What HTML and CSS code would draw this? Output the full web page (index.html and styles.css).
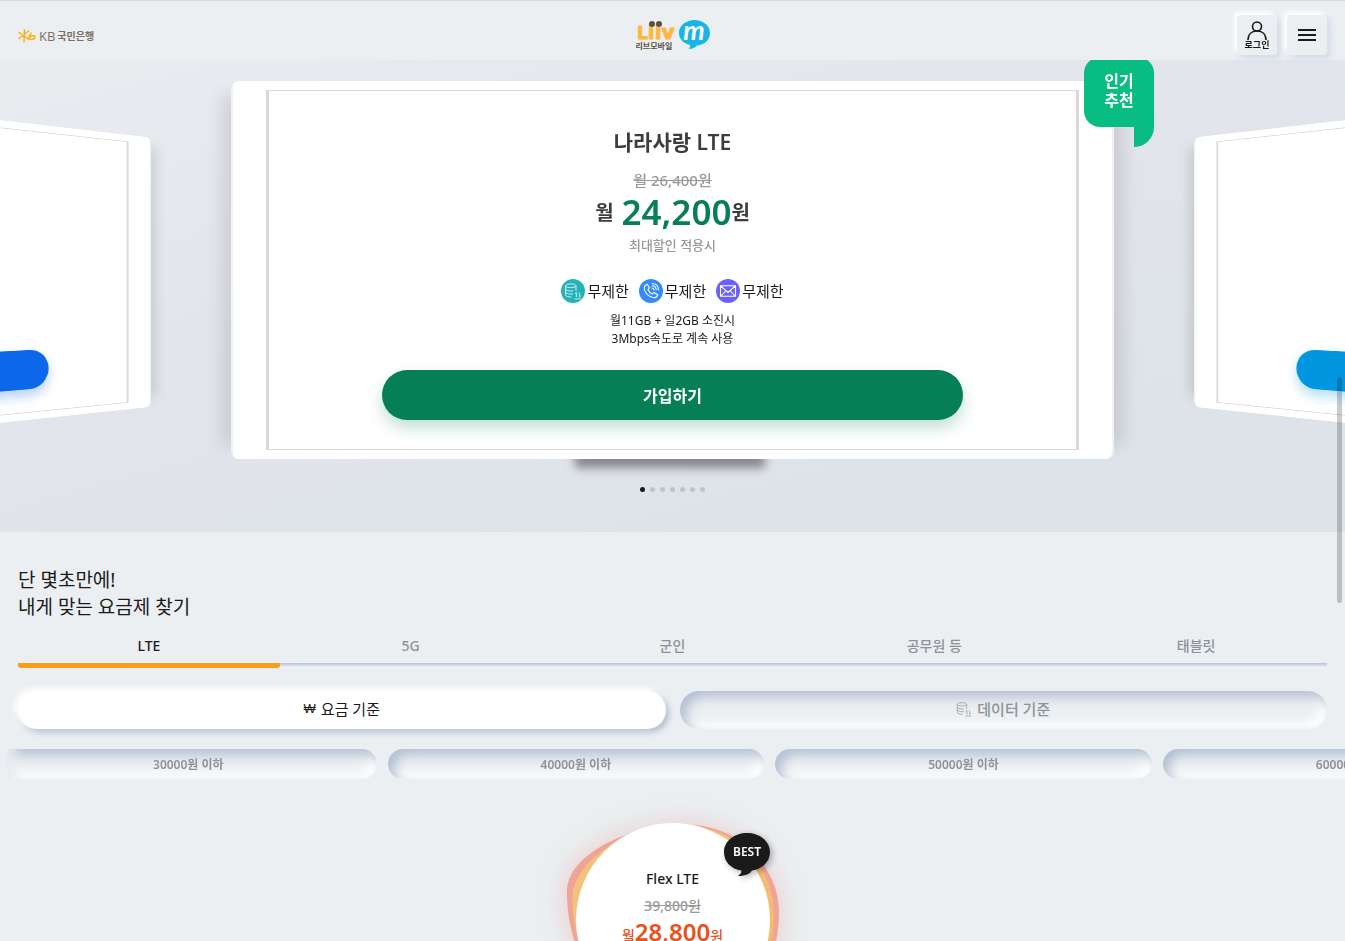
FILE: index.html
```html
<!DOCTYPE html>
<html lang="ko">
<head>
    <meta charset="UTF-8">
    <meta name="viewport" content="width=device-width, initial-scale=1.0">
    <title>리브모바일</title>
    <link rel="stylesheet" href="styles.css">
</head>
<body>
    <svg class="defs" width="0" height="0" aria-hidden="true">
        <symbol id="icon-data" viewBox="0 0 24 24">
            <g fill="none" stroke="currentColor">
                <ellipse cx="9" cy="5" rx="7" ry="2.500"/>
                <path d="M2 5v12c0 2 3.500 3 8 3M2 9c0 2 3.500 3 7 3h3M2 13c0 2 3.500 3 7 3h3M16 5v7M14 22.500h9M16.500 20v-6l-2 2M20.500 14v6l2-2"/>
            </g>
        </symbol>
    </svg>

    <div class="page">
        <header class="header">
            <a class="bank" href="#">
                <svg width="18" height="14" viewBox="0 0 18 14" aria-hidden="true">
                    <g fill="none" stroke="#fbaf17" stroke-width="1.500" stroke-linecap="round">
                        <path d="M6.500 1l-.5 12M1 3.500l10 7M1 9.500L10.500 2"/>
                        <path d="M13 4l-2.500 5c1.500-2 6-3.500 6.500-1.200.3 2.500-4 3.700-6.500 1.200"/>
                    </g>
                </svg>
                <span class="bank-kb">KB</span>
                <span class="bank-name">국민은행</span>
            </a>

            <a class="logo" href="#">
                <span class="logo-words">
                    <svg width="42" height="21" viewBox="0 0 42 21">
                        <text class="logo-liiv" x="1" y="19"><tspan class="logo-l">L</tspan>iiv</text>
                        <circle cx="16" cy="4" r="3" fill="#5a5044"/>
                        <circle cx="23" cy="4" r="3" fill="#5a5044"/>
                    </svg>
                    <span class="logo-ko">리브모바일</span>
                </span>
                <svg width="31" height="30" viewBox="0 0 31 30">
                    <path d="M15.500 0C24 0 31 5.500 31 13c0 7-6 12-13 12.500-2 2.500-5 3.500-8.500 3.500 1.500-1.200 2-2.500 1.500-4C4.500 23.500 0 19 0 13 0 5.500 7 0 15.500 0z" fill="#17b6e4"/>
                    <text class="logo-m" x="15" y="20" text-anchor="middle">m</text>
                </svg>
            </a>

            <div class="header-buttons">
                <button class="icon-button" type="button">
                    <svg width="20" height="19" viewBox="0 0 20 19" fill="none" stroke="#1a1a1a" stroke-width="1.600" aria-hidden="true">
                        <circle cx="10" cy="5.500" r="4.500"/>
                        <path d="M1 19c0-6 4-9 9-9s9 3 9 9"/>
                    </svg>
                    <span>로그인</span>
                </button>
                <button class="icon-button" type="button" aria-label="메뉴">
                    <svg width="18" height="14" viewBox="0 0 18 14" stroke="#1a1a1a" stroke-width="2" aria-hidden="true">
                        <path d="M0 2h18M0 7h18M0 12h18"/>
                    </svg>
                </button>
            </div>
        </header>

        <main>
            <section class="hero">
                <div class="carousel">
                    <div class="slide slide-prev">
                        <div class="plan">
                            <button class="join join-blue" type="button" aria-label="가입하기"></button>
                        </div>
                    </div>

                    <div class="slide slide-current">
                        <div class="plan">
                            <h2 class="plan-name">나라사랑 LTE</h2>
                            <del class="plan-before">월 26,400원</del>
                            <p class="plan-price"><span class="plan-unit">월</span><strong>24,200</strong>원</p>
                            <p class="plan-note">최대할인 적용시</p>
                            <ul class="features">
                                <li>
                                    <span class="dot-icon teal"><svg width="18" height="18"><use href="#icon-data"/></svg></span>무제한
                                </li>
                                <li>
                                    <span class="dot-icon blue">
                                        <svg width="18" height="18" viewBox="0 0 24 24" fill="none" stroke="currentColor" stroke-width="1.400">
                                            <path d="M7 3l3 5-2 2c1 3 3 5 6 6l2-2 5 3c-1 3-3 4-5 4C9 20 3 14 3 8c0-2 1-4 4-5z"/>
                                            <path d="M13 8c2 0 3 1 3 3M13 5c4 0 6 2 6 6M13 2c6 0 9 3 9 9"/>
                                        </svg>
                                    </span>무제한
                                </li>
                                <li>
                                    <span class="dot-icon violet">
                                        <svg width="18" height="18" viewBox="0 0 24 24" fill="none" stroke="currentColor" stroke-width="1.400">
                                            <path d="M2 5h20v14H2zM2 5l10 9 10-9M2 19l7-7M22 19l-7-7"/>
                                        </svg>
                                    </span>무제한
                                </li>
                            </ul>
                            <p class="plan-detail">월11GB + 일2GB 소진시<br>3Mbps속도로 계속 사용</p>
                            <button class="join join-green" type="button">가입하기</button>
                        </div>
                        <span class="ribbon">인기<br>추천</span>
                    </div>

                    <div class="slide slide-next">
                        <div class="plan">
                            <button class="join join-sky" type="button" aria-label="가입하기"></button>
                        </div>
                    </div>
                </div>

                <div class="pager">
                    <button class="active" type="button" aria-label="1"></button>
                    <button type="button" aria-label="2"></button>
                    <button type="button" aria-label="3"></button>
                    <button type="button" aria-label="4"></button>
                    <button type="button" aria-label="5"></button>
                    <button type="button" aria-label="6"></button>
                    <button type="button" aria-label="7"></button>
                </div>
            </section>

            <section class="finder">
                <h2 class="finder-title">단 몇초만에!<br>내게 맞는 요금제 찾기</h2>

                <div class="tabs">
                    <button class="active" type="button">LTE</button>
                    <button type="button">5G</button>
                    <button type="button">군인</button>
                    <button type="button">공무원 등</button>
                    <button type="button">태블릿</button>
                </div>

                <div class="criteria">
                    <button class="active" type="button"><span class="won">₩</span>요금 기준</button>
                    <button type="button"><svg width="16" height="16" aria-hidden="true"><use href="#icon-data"/></svg>데이터 기준</button>
                </div>

                <div class="ranges">
                    <button type="button">30000원 이하</button>
                    <button type="button">40000원 이하</button>
                    <button type="button">50000원 이하</button>
                    <button type="button">60000원 이하</button>
                </div>

                <a class="result" href="#">
                    <svg class="result-blob" viewBox="0 0 212 212" aria-hidden="true">
                        <defs>
                            <linearGradient id="amber" x1="0" y1="0" x2="1" y2="1">
                                <stop offset="0" stop-color="#f3c57e"/>
                                <stop offset="1" stop-color="#f5b76c"/>
                            </linearGradient>
                        </defs>
                        <path d="M0 66C2 40 34 18 74 7 110-3 145 0 170 16c26 18 43 45 42 76-1 60-40 115-100 116C40 208-2 130 0 66z" fill="#f0a497"/>
                        <path d="M6 68C12 40 50 8 100 4c30-3 55 2 76 20 22 20 32 45 31 74-3 60-40 104-95 104C50 202 0 130 6 68z" fill="url(#amber)"/>
                    </svg>
                    <span class="result-disc">
                        <span class="result-name">Flex LTE</span>
                        <del class="result-before">39,800원</del>
                        <span class="result-price">월<strong>28,800</strong>원</span>
                    </span>
                    <svg class="result-best" width="46" height="44" viewBox="0 0 46 44">
                        <path d="M23 0c12.500 0 23 8 23 19 0 10-8 17-18 18.500-2 3-6 5.500-14 5.500 2-1.500 3.500-3 3.500-5.500C7 36 0 29 0 19 0 8 10.500 0 23 0z" fill="#1a1a1a"/>
                        <text x="23" y="23" text-anchor="middle">BEST</text>
                    </svg>
                </a>
            </section>
        </main>

        <div class="scroll-thumb"></div>
    </div>
</body>
</html>
```

FILE: styles.css
```css
* {
    box-sizing: border-box;
    margin: 0;
    padding: 0;
}

body {
    background: #ebeff2;
    color: #1a1a1a;
    font-family: "Noto Sans", "Noto Sans CJK KR", sans-serif;
    font-size: 14px;
}

button {
    border: none;
    background: none;
    font: inherit;
    color: inherit;
    cursor: pointer;
}

a {
    color: inherit;
    text-decoration: none;
}

ul {
    list-style: none;
}

.defs {
    position: absolute;
}

.page {
    height: 100vh;
    overflow: hidden;
}

/* header */
.header {
    position: relative;
    z-index: 10;
    display: grid;
    grid-template-columns: 1fr auto 1fr;
    align-items: center;
    height: 60px;
    padding: 10px 18px 0;
    background: #ebeff2;
    box-shadow: inset 0 1px #d8dce0;
}

.bank {
    display: flex;
    align-items: center;
    padding-top: 2px;
    color: #7b6f66;
    line-height: 14px;
}

.bank-kb {
    margin: 0 2px 0 3px;
    font-family: "Open Sans", sans-serif;
    font-size: 13px;
}

.bank-name {
    font-size: 10px;
    font-weight: 600;
}

.logo {
    display: flex;
    gap: 1px;
    align-items: center;
}

.logo svg {
    overflow: visible;
}

.logo-words {
    display: flex;
    flex-direction: column;
}

.logo-liiv {
    font-family: "DejaVu Sans", sans-serif;
    font-size: 20px;
    font-weight: 700;
    fill: #fdb73e;
    stroke: #fdb73e;
    stroke-width: 1px;
    stroke-linejoin: round;
}

.logo-l {
    font-size: 17px;
}

.logo-ko {
    color: #5a5044;
    font-size: 8px;
    font-weight: 700;
    line-height: 9px;
}

.logo-m {
    font-family: Lato, sans-serif;
    font-size: 27px;
    font-style: italic;
    font-weight: 700;
    fill: #fff;
}

.header-buttons {
    display: flex;
    gap: 10px;
    justify-content: flex-end;
}

.icon-button {
    display: flex;
    flex-direction: column;
    align-items: center;
    justify-content: center;
    width: 40px;
    height: 40px;
    border-radius: 4px;
    background: #ebeff2;
    box-shadow: -3px -3px 5px #fff, 3px 3px 6px #cfd6e6;
    font-size: 9px;
    font-weight: 700;
    line-height: 10px;
}

/* hero */
.hero {
    height: 472px;
    overflow: hidden;
    padding-top: 21px;
    background: linear-gradient(165deg, #e9ecef, #e2e5ec 40%, #dee2e9 80%);
}

.carousel {
    position: relative;
    display: flex;
    gap: 70px;
    justify-content: center;
    perspective: 1200px;
    perspective-origin: 50% 52%;
}

.carousel::before {
    content: "";
    position: absolute;
    bottom: -9px;
    left: calc(50% - 98px);
    width: 190px;
    height: 30px;
    background: rgba(0, 0, 0, 0.4);
    filter: blur(5px);
}

.slide {
    position: relative;
    display: flex;
    flex: none;
    width: calc(100% - 462px);
    padding: 9px 33px;
    border-right: 2px solid #f2f2f2;
    border-left: 2px solid #f2f2f2;
    border-radius: 8px;
    background: #fff;
    box-shadow: -24px 0 16px -14px rgba(0, 0, 0, 0.1), 24px 0 16px -14px rgba(0, 0, 0, 0.1);
}

.slide-prev {
    transform: translateZ(-102px) rotateY(60deg);
}

.slide-next {
    transform: translateZ(-102px) rotateY(-60deg);
}

.plan {
    display: flex;
    flex: 1;
    flex-direction: column;
    align-items: center;
    justify-content: flex-end;
    padding: 37px 0 29px;
    border: 1px solid #d9d9d9;
    border-width: 1px 3px;
    color: #3c3c3c;
}

.plan-name {
    font-size: 21px;
    font-weight: 600;
    line-height: 28px;
}

.plan-before {
    margin-top: 14px;
    color: #999;
    font-size: 15px;
    font-weight: 500;
    line-height: 20px;
}

.plan-price {
    display: flex;
    align-items: center;
    height: 42px;
    font-size: 20px;
    font-weight: 600;
}

.plan-unit {
    margin-right: 8px;
}

.plan-price strong {
    color: #067e56;
    font-size: 35px;
    font-weight: 600;
}

.plan-note {
    margin-top: 3px;
    color: #999;
    font-size: 13px;
    font-weight: 500;
    line-height: 20px;
}

.features {
    display: flex;
    gap: 10px;
    margin-top: 24px;
    color: #1a1a1a;
    font-size: 15px;
    font-weight: 400;
    line-height: 24px;
}

.features li {
    display: flex;
    gap: 2px;
}

.dot-icon {
    display: grid;
    place-items: center;
    width: 24px;
    height: 24px;
    border-radius: 50%;
    color: #fff;
}

.teal {
    background: #23b2b8;
}

.blue {
    background: #338aff;
}

.violet {
    background: #6a63f6;
}

.plan-detail {
    margin-top: 9px;
    color: #1a1a1a;
    font-size: 12px;
    line-height: 18px;
    text-align: center;
}

.join {
    width: 72%;
    height: 50px;
    margin-top: 22px;
    border-radius: 25px;
    color: #fff;
    font-size: 16px;
    font-weight: 700;
}

.join-green {
    background: #067e56;
    box-shadow: 0 8px 16px rgba(6, 126, 86, 0.25);
}

.join-blue {
    background: #0c68e8;
    box-shadow: 0 8px 16px rgba(12, 104, 232, 0.3);
}

.join-sky {
    background: #0096e0;
    box-shadow: 0 8px 16px rgba(0, 150, 224, 0.3);
}

.ribbon {
    position: absolute;
    top: -24px;
    right: -42px;
    width: 70px;
    height: 70px;
    padding-top: 15px;
    border-radius: 16px 16px 0 16px;
    background: #09bd82;
    color: #fff;
    font-size: 16px;
    font-weight: 600;
    line-height: 19px;
    text-align: center;
}

.ribbon::after {
    content: "";
    position: absolute;
    top: 100%;
    right: 0;
    width: 20px;
    height: 20px;
    border-radius: 0 0 20px 0;
    background: #09bd82;
}

.pager {
    display: flex;
    gap: 5px;
    justify-content: center;
    margin-top: 28px;
}

.pager button {
    width: 5px;
    height: 5px;
    border-radius: 50%;
    background: #bfc3cb;
}

.pager .active {
    background: #1a1a1a;
}

/* plan finder */
.finder {
    padding: 35px 18px 0;
}

.finder-title {
    font-size: 19px;
    font-weight: 400;
    line-height: 27px;
}

.tabs {
    display: flex;
    margin-top: 7px;
    border-radius: 3px;
    background: linear-gradient(#b9c3d6, #dde2ec 60%, #f8fafc) bottom / 100% 5px no-repeat;
}

.tabs button {
    flex: 1;
    height: 40px;
    padding-bottom: 6px;
    border-radius: 3px;
    color: #8e9298;
    font-weight: 500;
}

.tabs .active {
    color: #1a1a1a;
    background: linear-gradient(#f79e1b, #f79e1b) bottom / 100% 5px no-repeat;
}

.criteria {
    display: flex;
    gap: 14px;
    margin-top: 23px;
}

.criteria button,
.ranges button {
    border-radius: 20px;
    box-shadow: inset 6px 6px 12px #b4bfd2, inset -6px -6px 12px #fff;
    color: #8e9298;
    font-weight: 500;
}

.criteria button {
    display: flex;
    flex: 1;
    gap: 5px;
    align-items: center;
    justify-content: center;
    height: 38px;
    padding-bottom: 3px;
    font-size: 15px;
}

.criteria .active {
    background: #fff;
    box-shadow: -3px -3px 6px #fff, 3px 3px 6px #aebbd0;
    color: #1a1a1a;
    font-weight: 400;
}

.won {
    font-family: "Liberation Sans", sans-serif;
    font-size: 13px;
}

.ranges {
    display: flex;
    gap: 11px;
    margin: 20px -18px 0;
    overflow: hidden;
    mask-image: linear-gradient(to right, transparent 6px, #000 24px);
}

.ranges button {
    flex: 0 0 28%;
    height: 30px;
    font-size: 12px;
    font-weight: 600;
}

.ranges button:first-child {
    border-radius: 0 20px 20px 0;
}

/* recommended plan */
.result {
    position: relative;
    display: block;
    width: 194px;
    height: 194px;
    margin: 44px auto 0;
}

.result-blob {
    position: absolute;
    top: 0;
    left: -9px;
    width: 212px;
    height: 212px;
    filter: drop-shadow(0 0 14px rgba(240, 120, 100, 0.3));
}

.result-disc {
    position: relative;
    display: flex;
    flex-direction: column;
    align-items: center;
    height: 100%;
    padding-top: 43px;
    border-radius: 50%;
    background: #fff;
}

.result-name {
    font-weight: 500;
    line-height: 26px;
}

.result-before {
    color: #999;
    font-weight: 500;
    line-height: 28px;
}

.result-price {
    color: #e9501c;
    font-weight: 500;
    line-height: 24px;
}

.result-price strong {
    font-size: 24px;
    font-weight: 600;
}

.result-best {
    position: absolute;
    top: 10px;
    right: 0;
    overflow: visible;
    filter: drop-shadow(2px 2px 3px rgba(0, 0, 0, 0.3));
}

.result-best text {
    font-size: 12px;
    font-weight: 600;
    fill: #fff;
}

.scroll-thumb {
    position: fixed;
    top: 377px;
    right: 3px;
    width: 5px;
    height: 226px;
    border-radius: 3px;
    background: rgba(0, 0, 0, 0.2);
}
```
